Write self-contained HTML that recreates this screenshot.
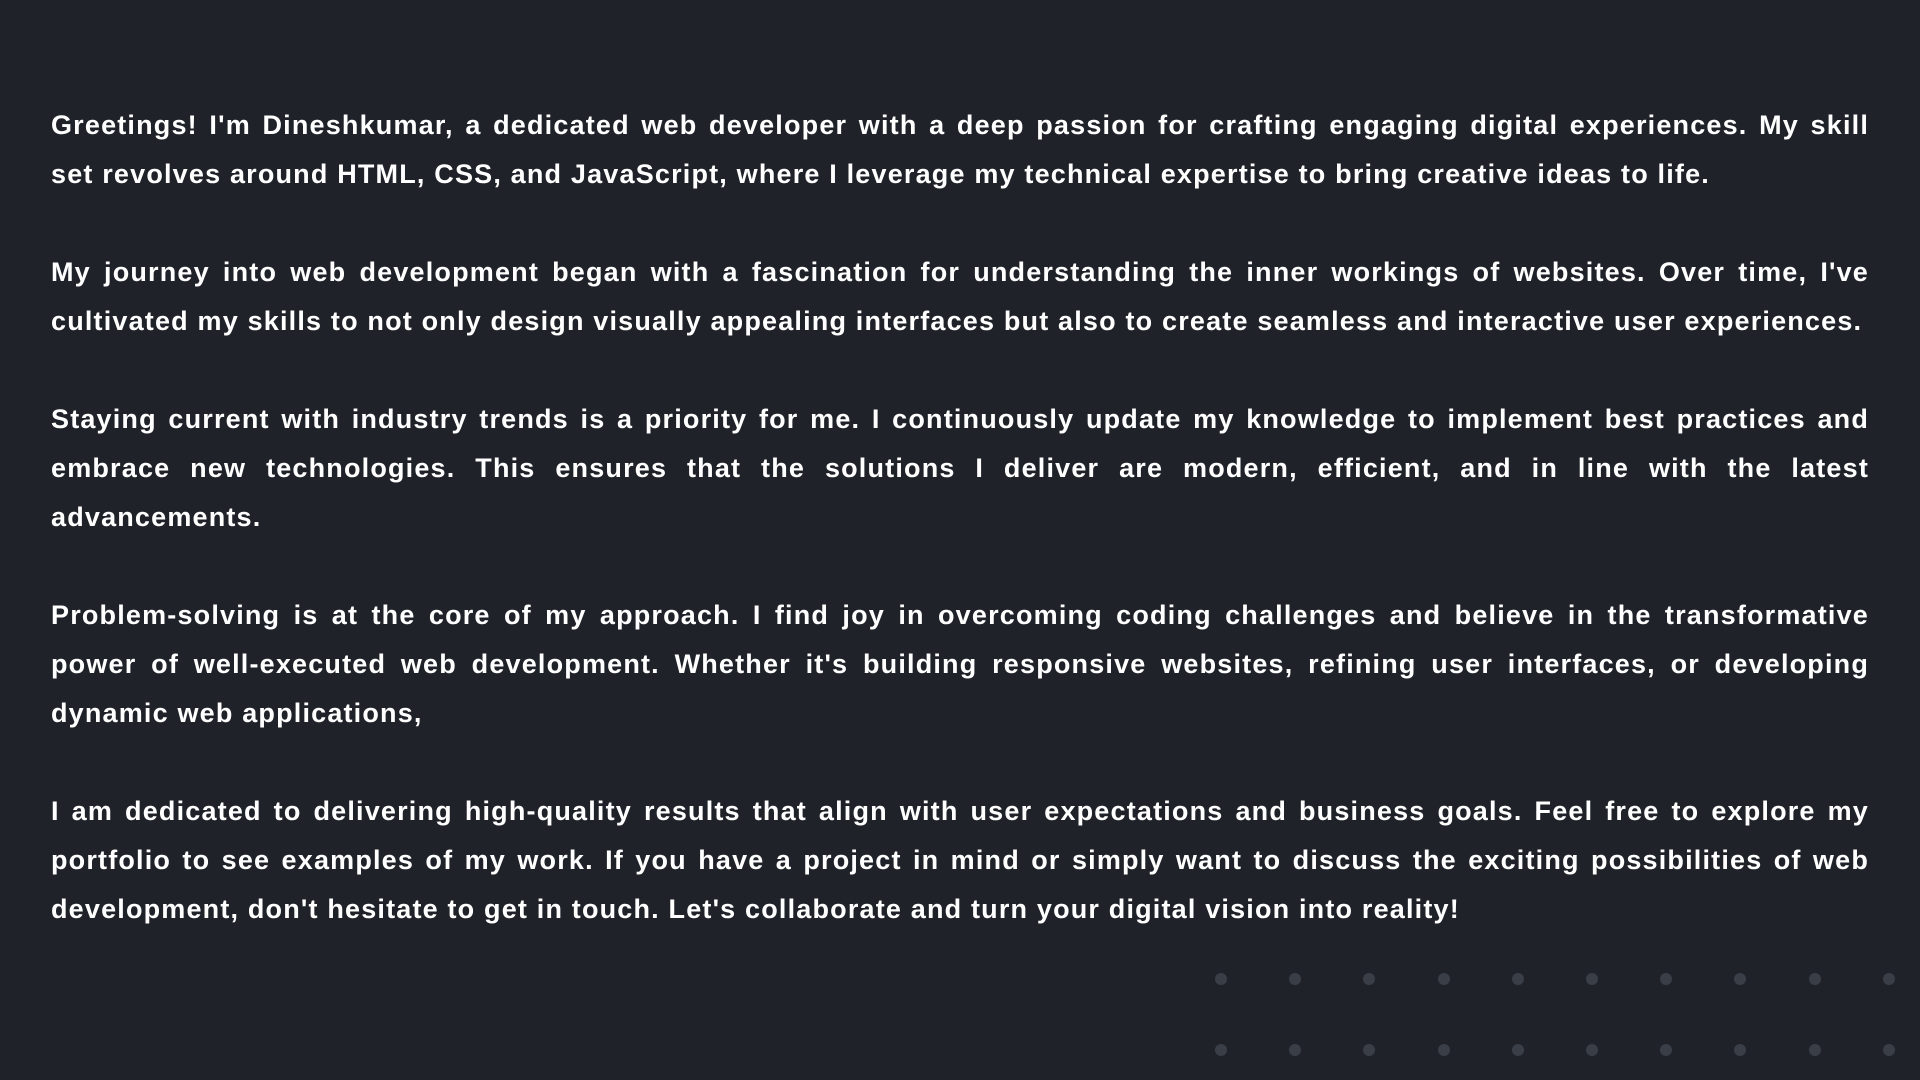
<!DOCTYPE html>
<html><head><meta charset="utf-8"><style>
html,body{margin:0;padding:0;background:#1f2329;width:1920px;height:1080px;overflow:hidden}
.t{position:absolute;left:51px;width:1818px;top:101px;font-family:"Liberation Sans",sans-serif;font-weight:bold;font-size:27px;letter-spacing:1.18px;color:#fff;line-height:49px}
.l{display:block;text-align:justify;text-align-last:justify;white-space:nowrap;height:49px}
.e{display:block;height:49px;white-space:nowrap}
.g{height:49px}
.d{position:absolute;width:12px;height:12px;border-radius:50%;background:#3a3f47}
</style></head><body>
<div class="t">
<span class="l">Greetings! I'm Dineshkumar, a dedicated web developer with a deep passion for crafting engaging digital experiences. My skill</span>
<span class="e">set revolves around HTML, CSS, and JavaScript, where I leverage my technical expertise to bring creative ideas to life.</span>
<div class="g"></div>
<span class="l">My journey into web development began with a fascination for understanding the inner workings of websites. Over time, I've</span>
<span class="e">cultivated my skills to not only design visually appealing interfaces but also to create seamless and interactive user experiences.</span>
<div class="g"></div>
<span class="l">Staying current with industry trends is a priority for me. I continuously update my knowledge to implement best practices and</span>
<span class="l">embrace new technologies. This ensures that the solutions I deliver are modern, efficient, and in line with the latest</span>
<span class="e">advancements.</span>
<div class="g"></div>
<span class="l">Problem-solving is at the core of my approach. I find joy in overcoming coding challenges and believe in the transformative</span>
<span class="l">power of well-executed web development. Whether it's building responsive websites, refining user interfaces, or developing</span>
<span class="e">dynamic web applications,</span>
<div class="g"></div>
<span class="l">I am dedicated to delivering high-quality results that align with user expectations and business goals. Feel free to explore my</span>
<span class="l">portfolio to see examples of my work. If you have a project in mind or simply want to discuss the exciting possibilities of web</span>
<span class="e">development, don't hesitate to get in touch. Let's collaborate and turn your digital vision into reality!</span>
</div>
<div id="dots"></div>
<script>
var h='';for(var r=0;r<2;r++)for(var c=0;c<10;c++){h+='<div class="d" style="left:'+(1215+c*74.2)+'px;top:'+(973+r*71)+'px"></div>';}
document.getElementById('dots').innerHTML=h;
</script>
</body></html>
